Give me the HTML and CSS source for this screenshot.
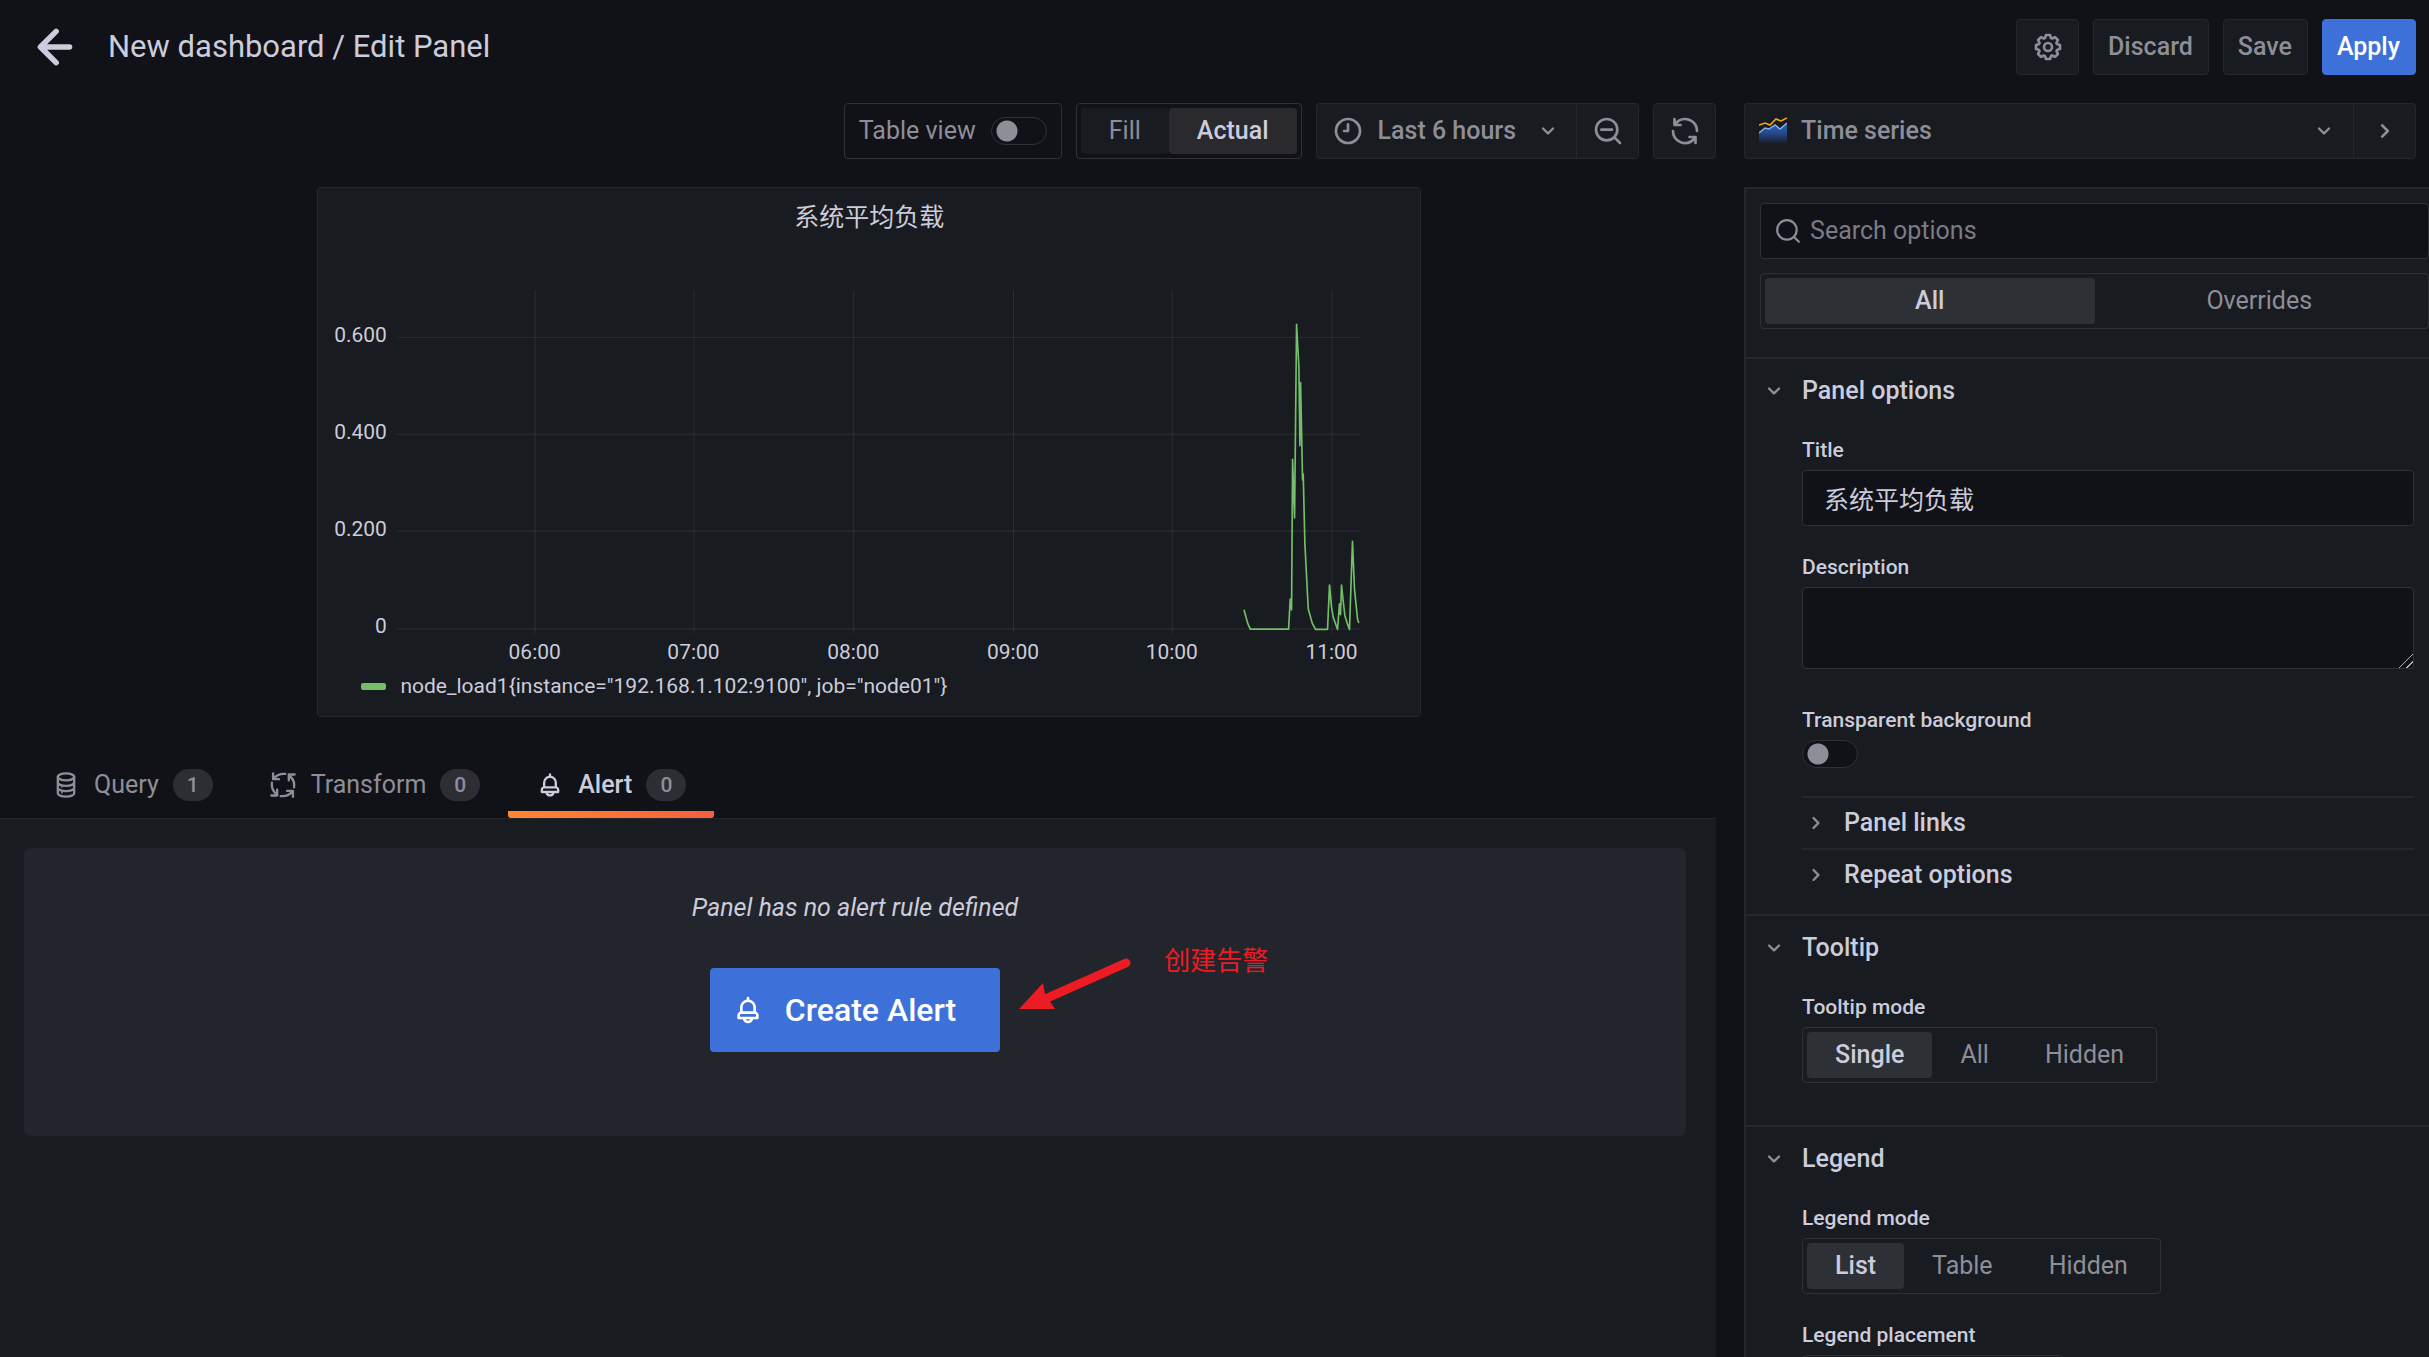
FILE: index.html
```html
<!DOCTYPE html>
<html lang="en">
<head>
<meta charset="utf-8">
<title>New dashboard / Edit Panel</title>
<link rel="stylesheet" href="styles.css">
</head>
<body>
<svg class="sprite" aria-hidden="true">
  <symbol id="angle-down" viewBox="0 0 24 24"><path d="M17,9.17a1,1,0,0,0-1.41,0L12,12.71,8.46,9.17a1,1,0,0,0-1.41,0,1,1,0,0,0,0,1.42l4.24,4.24a1,1,0,0,0,1.42,0L17,10.59A1,1,0,0,0,17,9.17Z"/></symbol>
  <symbol id="angle-right" viewBox="0 0 24 24"><path d="M14.83,11.29,10.59,7.05a1,1,0,0,0-1.42,0,1,1,0,0,0,0,1.41L12.71,12,9.17,15.54a1,1,0,0,0,0,1.41,1,1,0,0,0,.71.29,1,1,0,0,0,.71-.29l4.24-4.24A1,1,0,0,0,14.83,11.29Z"/></symbol>
  <symbol id="bell" viewBox="0 0 24 24"><path d="M18,13.18V10a6,6,0,0,0-5-5.91V3a1,1,0,0,0-2,0V4.09A6,6,0,0,0,6,10v3.18A3,3,0,0,0,4,16v2a1,1,0,0,0,1,1H8.14a4,4,0,0,0,7.72,0H19a1,1,0,0,0,1-1V16A3,3,0,0,0,18,13.18ZM8,10a4,4,0,0,1,8,0v3H8Zm4,10a2,2,0,0,1-1.72-1H13.72A2,2,0,0,1,12,20Zm6-3H6V16a1,1,0,0,1,1-1H17a1,1,0,0,1,1,1Z"/></symbol>
</svg>

<header class="topbar">
  <button class="back" aria-label="Go back"><svg class="back-icon" viewBox="0 0 34 34"><path d="M18 3 4 17 18 31M5 17H30"/></svg></button>
  <h1 class="page-title">New dashboard / Edit Panel</h1>
  <div class="actions">
    <button class="btn btn-icon" aria-label="Dashboard settings"><svg class="icon" viewBox="0 0 24 24"><path d="M21.32,9.55l-1.89-.63.89-1.78A1,1,0,0,0,20.13,6L18,3.87a1,1,0,0,0-1.15-.19l-1.78.89-.63-1.89A1,1,0,0,0,13.5,2h-3a1,1,0,0,0-.95.68L8.92,4.57,7.14,3.68A1,1,0,0,0,6,3.87L3.87,6a1,1,0,0,0-.19,1.15l.89,1.78-1.89.63A1,1,0,0,0,2,10.5v3a1,1,0,0,0,.68.95l1.89.63-.89,1.78A1,1,0,0,0,3.87,18L6,20.13a1,1,0,0,0,1.15.19l1.78-.89.63,1.89a1,1,0,0,0,.95.68h3a1,1,0,0,0,.95-.68l.63-1.89,1.78.89A1,1,0,0,0,18,20.13L20.13,18a1,1,0,0,0,.19-1.15l-.89-1.78,1.89-.63A1,1,0,0,0,22,13.5v-3A1,1,0,0,0,21.32,9.55ZM20,12.78l-1.2.4A2,2,0,0,0,17.64,16l.57,1.14-1.1,1.1L16,17.64a2,2,0,0,0-2.79,1.16l-.4,1.2H11.22l-.4-1.2A2,2,0,0,0,8,17.64l-1.14.57-1.1-1.1L6.36,16A2,2,0,0,0,5.2,13.18L4,12.78V11.22l1.2-.4A2,2,0,0,0,6.36,8L5.79,6.89l1.1-1.1L8,6.36A2,2,0,0,0,10.82,5.2l.4-1.2h1.56l.4,1.2A2,2,0,0,0,16,6.36l1.14-.57,1.1,1.1L17.64,8a2,2,0,0,0,1.16,2.79l1.2.4ZM12,8a4,4,0,1,0,4,4A4,4,0,0,0,12,8Zm0,6a2,2,0,1,1,2-2A2,2,0,0,1,12,14Z"/></svg></button>
    <button class="btn">Discard</button>
    <button class="btn">Save</button>
    <button class="btn btn-primary">Apply</button>
  </div>
</header>

<div class="editor">
  <main class="main">
    <div class="toolbar">
      <label class="table-view" for="table-view">Table view <input class="switch" type="checkbox" id="table-view"></label>
      <div class="radio-group filled" role="radiogroup" aria-label="Display mode">
        <label class="radio"><input type="radio" name="display"><span>Fill</span></label>
        <label class="radio"><input type="radio" name="display" checked><span>Actual</span></label>
      </div>
      <div class="btn-group">
        <button class="btn time-btn"><svg class="icon line" viewBox="0 0 24 24"><circle cx="12" cy="12" r="9"/><path d="M12 7v5H9"/></svg><span class="time-range">Last 6 hours</span><svg class="icon-sm"><use href="#angle-down"/></svg></button>
        <button class="btn btn-icon" aria-label="Zoom out"><svg class="icon line" viewBox="0 0 24 24"><circle cx="11" cy="11" r="8"/><path d="M17 17l4 4M7 11h8"/></svg></button>
      </div>
      <button class="btn btn-icon" aria-label="Refresh"><svg class="icon" viewBox="0 0 24 24"><path d="M19.91,15.51H15.38a1,1,0,0,0,0,2h2.4A8,8,0,0,1,4,12a1,1,0,0,0-2,0,10,10,0,0,0,16.88,7.23V21a1,1,0,0,0,2,0V16.5A1,1,0,0,0,19.91,15.51ZM12,2A10,10,0,0,0,5.12,4.77V3a1,1,0,0,0-2,0V7.5a1,1,0,0,0,1,1h4.5a1,1,0,0,0,0-2H6.22A8,8,0,0,1,20,12a1,1,0,0,0,2,0A10,10,0,0,0,12,2Z"/></svg></button>
    </div>

    <section class="preview">
      <h2 class="preview-title">系统平均负载</h2>
      <svg class="chart" viewBox="0 70 1103 400" role="img" aria-label="System load over the last six hours">
        <path class="grid" d="M217.5 103V447M376.5 103V447M536.5 103V447M696.5 103V447M855.5 103V447M1015.5 103V447M79 150.5H1044M79 247.5H1044M79 344.5H1044M79 442.5H1044"/>
        <g class="axis axis-y">
          <text x="69" y="155">0.600</text>
          <text x="69" y="252">0.400</text>
          <text x="69" y="349">0.200</text>
          <text x="69" y="447">0</text>
        </g>
        <g class="axis axis-x">
          <text x="217" y="473">06:00</text>
          <text x="376" y="473">07:00</text>
          <text x="536" y="473">08:00</text>
          <text x="696" y="473">09:00</text>
          <text x="855" y="473">10:00</text>
          <text x="1015" y="473">11:00</text>
        </g>
        <g transform="translate(863 94) scale(.3333)">
          <path class="series" d="M193 988 204 1028 212 1046H327L332 956 336 988 339 536 345 712 351 130 358 260 361 495 363 305 369 598 371 580 376 790 386 985 398 1028 408 1047H444L450 914 456 980 461 1010 468 1030 474 1047 480 970 483 1003 486 914 492 970 496 1005 503 1028 510 1047 519 782 525 925 534 1015 538 1028"/>
        </g>
      </svg>
      <div class="legend"><span class="swatch"></span>node_load1{instance="192.168.1.102:9100", job="node01"}</div>
    </section>

    <nav class="tabs">
      <a class="tab" href="#query"><svg class="icon-tab line" viewBox="0 0 24 24"><ellipse cx="12" cy="5" rx="7" ry="3"/><path d="M5 5v14c0 1.700 3 3 7 3s7-1.300 7-3V5M5 9.700c0 1.700 3 3 7 3s7-1.300 7-3M5 14.300c0 1.700 3 3 7 3s7-1.300 7-3"/><path stroke-width="1.500" d="M8.500 13.500v.1M8.500 18.500v.1"/></svg>Query<span class="count">1</span></a>
      <a class="tab" href="#transform"><svg class="icon-tab line" viewBox="0 0 24 24"><path d="M14 2.500Q8 1.800 4.500 6M3.500 2v5h5M21.500 14q.7-6-3.500-9.500M22 3h-5v5M10 21.500q6 .7 9.500-3.500M20.500 22v-5h-5M2.500 10q-.7 6 3.500 9.500M2 21h5v-5"/></svg>Transform<span class="count">0</span></a>
      <a class="tab active" href="#alert"><svg class="icon-tab"><use href="#bell"/></svg>Alert<span class="count">0</span></a>
    </nav>
    <section class="tab-body" id="alert">
      <div class="empty">
        <p class="empty-text">Panel has no alert rule defined</p>
        <div class="cta-wrap">
          <button class="cta"><svg class="icon"><use href="#bell"/></svg>Create Alert</button>
          <div class="note">
            <svg class="note-arrow" viewBox="0 0 114 56"><path class="shaft" d="M107 5 26 41"/><path class="head" d="M0 51 24 25 26 36 36 51Z"/></svg>
            <span class="note-text">创建告警</span>
          </div>
        </div>
      </div>
    </section>
  </main>

  <aside class="side">
    <div class="btn-group viz-picker">
      <button class="btn viz-btn">
        <svg class="viz-icon" viewBox="0 0 28 28"><defs><linearGradient id="area" x1="0" y1="0" x2="0" y2="1"><stop offset="0" stop-color="#2f66b8"/><stop offset=".5" stop-color="#25488a"/><stop offset="1" stop-color="#181b1f"/></linearGradient></defs><path fill="url(#area)" d="M0 16 6 11 10 12 16 8 21 12 28 6V27H0Z"/><path fill="none" stroke="#84aff1" stroke-width="1.500" d="M0 16 6 11 10 12 16 8 21 12 28 6"/><path fill="none" stroke="#f5a913" stroke-width="1.500" d="M0 8 6 6 11 8 17 2 22 4 28 1"/></svg>
        <span class="viz-name">Time series</span><svg class="icon-sm"><use href="#angle-down"/></svg></button>
      <button class="btn btn-icon" aria-label="Hide options"><svg class="icon"><use href="#angle-right"/></svg></button>
    </div>

    <div class="options">
      <div class="options-head">
        <div class="search">
          <svg class="icon-search line" viewBox="0 0 24 24"><circle cx="11" cy="11" r="9"/><path d="M17.500 17.500l4.500 4.500"/></svg>
          <input class="search-input" type="text" placeholder="Search options" aria-label="Search options">
        </div>
        <div class="radio-group wide" role="radiogroup" aria-label="Options filter">
          <label class="radio"><input type="radio" name="filter" checked><span>All</span></label>
          <label class="radio"><input type="radio" name="filter"><span>Overrides</span></label>
        </div>
      </div>

      <section class="group">
        <button class="group-head"><svg class="icon-sm"><use href="#angle-down"/></svg>Panel options</button>
        <div class="group-body">
          <div class="field"><label class="label" for="title">Title</label><input class="text-input" id="title" type="text" value="系统平均负载"></div>
          <div class="field"><label class="label" for="desc">Description</label><textarea class="text-area" id="desc"></textarea></div>
          <div class="field"><label class="label" for="transparent">Transparent background</label><input class="switch" id="transparent" type="checkbox"></div>
          <button class="sub-head"><svg class="icon-sm"><use href="#angle-right"/></svg>Panel links</button>
          <button class="sub-head"><svg class="icon-sm"><use href="#angle-right"/></svg>Repeat options</button>
        </div>
      </section>

      <section class="group group-spaced">
        <button class="group-head"><svg class="icon-sm"><use href="#angle-down"/></svg>Tooltip</button>
        <div class="group-body">
          <div class="field"><span class="label" id="tooltip-mode">Tooltip mode</span>
            <div class="radio-group" role="radiogroup" aria-labelledby="tooltip-mode">
              <label class="radio"><input type="radio" name="tooltip" checked><span>Single</span></label>
              <label class="radio"><input type="radio" name="tooltip"><span>All</span></label>
              <label class="radio"><input type="radio" name="tooltip"><span>Hidden</span></label>
            </div>
          </div>
        </div>
      </section>

      <section class="group group-spaced">
        <button class="group-head"><svg class="icon-sm"><use href="#angle-down"/></svg>Legend</button>
        <div class="group-body">
          <div class="field"><span class="label" id="legend-mode">Legend mode</span>
            <div class="radio-group" role="radiogroup" aria-labelledby="legend-mode">
              <label class="radio"><input type="radio" name="legend" checked><span>List</span></label>
              <label class="radio"><input type="radio" name="legend"><span>Table</span></label>
              <label class="radio"><input type="radio" name="legend"><span>Hidden</span></label>
            </div>
          </div>
          <div class="field"><span class="label" id="legend-place">Legend placement</span>
            <div class="radio-group" role="radiogroup" aria-labelledby="legend-place">
              <label class="radio"><input type="radio" name="placement" checked><span>Bottom</span></label>
              <label class="radio"><input type="radio" name="placement"><span>Right</span></label>
            </div>
          </div>
        </div>
      </section>
    </div>
  </aside>
</div>
</body>
</html>
```
FILE: styles.css
```css
:root {
  --canvas: #111217;
  --surface: #181b1f;
  --raised: #22252b;
  --line: #25272c;
  --line-strong: #2f3136;
  --text: #ccccdc;
  --muted: #8e8e99;
  --blue: #3d71d9;
}

* { box-sizing: border-box; }

body {
  margin: 0;
  height: 100vh;
  overflow: hidden;
  display: flex;
  flex-direction: column;
  background: var(--canvas);
  color: var(--text);
  font: 400 25px/40px Roboto, "Noto Sans CJK SC", sans-serif;
}

button, input, textarea { font: inherit; color: inherit; margin: 0; }
h1, h2, p { margin: 0; font-weight: 400; }
svg { display: block; flex: none; fill: currentColor; }
.sprite { position: absolute; width: 0; height: 0; }
.line { fill: none; stroke: currentColor; stroke-width: 2; stroke-linecap: round; stroke-linejoin: round; }
.icon { width: 32px; height: 32px; }
.icon-sm { width: 28px; height: 28px; }
.icon-tab { width: 28px; height: 28px; }

/* Top bar */
.topbar { display: flex; align-items: center; padding: 19px 13px 28px 36px; }
.back { display: flex; padding: 0; border: 0; background: none; }
.back-icon { width: 38px; height: 38px; fill: none; stroke: currentColor; stroke-width: 5; stroke-linecap: round; stroke-linejoin: round; }
.page-title { flex: 1; margin-left: 34px; font-size: 31px; }
.actions { display: flex; gap: 14px; }

.btn {
  display: flex;
  align-items: center;
  justify-content: center;
  height: 56px;
  padding: 0 15px 0 14px;
  border: 1px solid var(--line);
  border-radius: 4px;
  background: var(--surface);
  color: var(--muted);
  font-weight: 500;
}
.btn-icon { width: 63px; padding: 0; }
.btn-primary { border-color: var(--blue); background: var(--blue); color: #fff; }
.btn-group { display: flex; }
.btn-group .btn:first-child { border-radius: 4px 0 0 4px; border-right: 0; }
.btn-group .btn:last-child { border-radius: 0 4px 4px 0; }

/* Editor columns */
.editor {
  flex: 1;
  min-height: 0;
  display: grid;
  grid-template-columns: minmax(0, 1fr) 28.2%;
  column-gap: 28px;
}
.main, .side { display: flex; flex-direction: column; min-height: 0; }

.toolbar { display: flex; justify-content: flex-end; gap: 14px; }
.table-view {
  display: flex;
  align-items: center;
  gap: 15px;
  height: 56px;
  padding: 0 14px;
  border: 1px solid var(--line-strong);
  border-radius: 4px;
  color: var(--muted);
}
.time-btn { padding: 0 14px 0 15px; gap: 14px; }
.time-range { padding-right: 4px; }

.switch {
  appearance: none;
  display: block;
  width: 56px;
  height: 28px;
  border: 1px solid var(--line-strong);
  border-radius: 14px;
  background: radial-gradient(circle at 15px 13px, var(--muted) 10px, transparent 11px) var(--canvas);
}

.radio-group {
  display: inline-flex;
  height: 56px;
  padding: 4px;
  border: 1px solid var(--line-strong);
  border-radius: 4px;
  color: var(--muted);
}
.radio { display: flex; }
.radio input { appearance: none; width: 0; height: 0; }
.radio span { flex: 1; padding: 0 28px; border-radius: 4px; line-height: 46px; text-align: center; }
.radio input:checked + span { background: #2d3035; color: var(--text); font-weight: 500; }
.filled span { background: var(--surface); }
.filled input:checked + span { background: #29292e; }
.wide { display: flex; }
.wide .radio { flex: 1; }

/* Panel preview */
.preview {
  width: 64.3%;
  margin: 28px 0 0 18.5%;
  padding: 10px 0 7px;
  border: 1px solid var(--line);
  border-radius: 4px;
  background: var(--surface);
}
.preview-title { font-size: 25px; text-align: center; }
.chart { width: 100%; margin-top: 19px; overflow: visible; }
.grid { fill: none; stroke: #2b2e32; stroke-width: 1; }
.axis { font-size: 21px; }
.axis-y { text-anchor: end; }
.axis-x { text-anchor: middle; }
.series { fill: none; stroke: #73bf69; stroke-width: 5; stroke-linejoin: round; }
.legend { display: flex; align-items: center; gap: 14px; padding: 14px 43px 7px; font-size: 21px; line-height: 32px; }
.swatch { width: 25px; height: 7px; border-radius: 2px; background: #73bf69; }

/* Tabs */
.tabs { display: flex; margin-top: 31px; padding-left: 24px; border-bottom: 1px solid var(--line); }
.tab {
  display: flex;
  align-items: center;
  height: 70px;
  padding: 4px 28px 0;
  color: var(--muted);
  text-decoration: none;
}
.active {
  background: linear-gradient(90deg, #ff8833, #f55f3e) bottom / 100% 7px no-repeat;
  border-radius: 3px;
  color: var(--text);
  font-weight: 500;
}
.tab .icon-tab { margin-right: 14px; }
.count {
  margin-left: 14px;
  padding: 0 14px;
  border-radius: 16px;
  background: #2d2e33;
  color: var(--muted);
  font-size: 21px;
  font-weight: 500;
  line-height: 32px;
}
.tab-body { flex: 1; padding: 29px 30px 0 24px; background: var(--surface); }
.empty { height: 288px; padding-top: 40px; border-radius: 6px; background: var(--raised); text-align: center; }
.empty-text { font-style: italic; }
.cta-wrap { position: relative; width: max-content; margin: 40px auto 0; }
.cta {
  display: flex;
  align-items: center;
  gap: 21px;
  height: 84px;
  padding: 0 44px 0 22px;
  border: 0;
  border-radius: 4px;
  background: var(--blue);
  color: #fff;
  font-size: 32px;
  font-weight: 500;
}
.note { position: absolute; left: 100%; top: -15px; display: flex; gap: 31px; padding-left: 19px; color: #ed1c24; }
.note-arrow { width: 114px; height: 56px; margin-top: 5px; }
.shaft { fill: none; stroke: #ed1c24; stroke-width: 9; stroke-linecap: round; }
.note-text { font-size: 26px; line-height: 16px; white-space: nowrap; }

/* Options pane */
.viz-picker { margin-right: 13px; }
.viz-btn { flex: 1; gap: 14px; }
.viz-icon { width: 28px; height: 28px; }
.viz-name { flex: 1; text-align: left; }
.options {
  flex: 1;
  min-height: 0;
  margin-top: 28px;
  overflow: hidden;
  border: solid var(--line);
  border-width: 2px 0 0 2px;
  background: var(--surface);
}
.options-head { display: flex; flex-direction: column; gap: 14px; padding: 14px 0 28px 14px; }
.search {
  display: flex;
  align-items: center;
  gap: 9px;
  height: 56px;
  padding: 0 14px;
  border: 1px solid var(--line-strong);
  border-radius: 4px;
  background: var(--canvas);
  color: var(--muted);
}
.icon-search { width: 26px; height: 26px; }
.search-input { flex: 1; min-width: 0; padding: 0; border: 0; background: none; }
.search-input::placeholder { color: #7b7b86; }

.group { border-top: 2px solid var(--line); padding-bottom: 14px; }
.group-spaced { padding-bottom: 42px; }
.group-head, .sub-head {
  display: flex;
  align-items: center;
  width: 100%;
  padding: 0;
  border: 0;
  background: none;
  font-weight: 500;
  text-align: left;
}
.group-head { height: 63px; padding-left: 14px; gap: 14px; }
.group-body { padding: 15px 15px 0 56px; }
.field { display: flex; flex-direction: column; align-items: flex-start; margin-bottom: 28px; }
.group-spaced .field:last-child { margin-bottom: 0; }
.label { margin-bottom: 7px; font-size: 21px; font-weight: 500; line-height: 26px; }
.text-input, .text-area { width: 100%; border: 1px solid var(--line-strong); border-radius: 4px; background: var(--canvas); }
.text-input { height: 56px; padding: 0 21px; }
.text-area { display: block; height: 82px; margin-bottom: 10px; resize: vertical; }
.text-area::-webkit-resizer {
  background: linear-gradient(135deg, transparent 50%, #b4b4b4 50%, #b4b4b4 56%, transparent 56%, transparent 74%, #b4b4b4 74%, #b4b4b4 80%, transparent 80%);
}
.sub-head { height: 52px; gap: 14px; border-top: 2px solid var(--line); }
.icon-sm { color: var(--muted); }
```
